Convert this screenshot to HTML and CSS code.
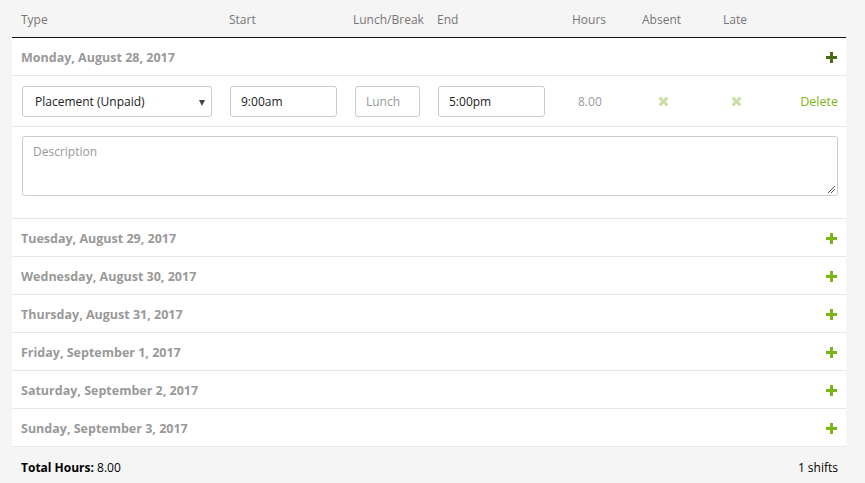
FILE: index.html
```html
<!DOCTYPE html>
<html>
<head>
<meta charset="utf-8">
<link rel="stylesheet" href="styles.css">
</head>
<body>
<div class="sheet">
  <div class="grid head">
    <div>Type</div><div>Start</div><div>Lunch/Break</div><div>End</div><div>Hours</div><div>Absent</div><div>Late</div><div></div>
  </div>
  <div class="panel">
    <div class="day open"><span>Monday, August 28, 2017</span><span class="plus dark"></span></div>
    <div class="grid entry">
      <div><div class="select">Placement (Unpaid)<span class="caret"></span></div></div>
      <div><div class="input w107">9:00am</div></div>
      <div><div class="input w65 ph">Lunch</div></div>
      <div><div class="input w107">5:00pm</div></div>
      <div class="hours">8.00</div>
      <div class="mark absent"><span class="x"></span></div>
      <div class="mark late"><span class="x"></span></div>
      <div class="del">Delete</div>
    </div>
    <div class="descrow"><div class="textarea">Description<span class="grip"></span></div></div>
    <div class="day"><span>Tuesday, August 29, 2017</span><span class="plus"></span></div>
    <div class="day"><span>Wednesday, August 30, 2017</span><span class="plus"></span></div>
    <div class="day"><span>Thursday, August 31, 2017</span><span class="plus"></span></div>
    <div class="day"><span>Friday, September 1, 2017</span><span class="plus"></span></div>
    <div class="day"><span>Saturday, September 2, 2017</span><span class="plus"></span></div>
    <div class="day"><span>Sunday, September 3, 2017</span><span class="plus"></span></div>
  </div>
  <div class="foot"><div><b>Total Hours:</b> 8.00</div><div>1 shifts</div></div>
</div>
</body>
</html>
```
FILE: styles.css
```css
html, body { margin: 0; padding: 0; background: #f5f5f5; }
body { font-family: "Open Sans", "Noto Sans", sans-serif; font-size: 12px; color: #000; }
.sheet { width: 834px; margin-left: 12px; }
.grid { display: grid; grid-template-columns: 208px 124px 84px 135px 70px 81px 64px 1fr; align-items: center; }
.head { height: 37px; border-bottom: 1px solid #111; color: #777; padding-left: 9px; padding-right: 8px; }
.head > div { margin-top: 1px; }
.panel { background: #fff; }
.day { display: flex; justify-content: space-between; align-items: center; border-bottom: 1px solid #e8e8e8; padding: 1px 9px 0 9px; box-sizing: border-box; height: 38px; font-weight: bold; color: #999; font-size: 12.5px; }
.plus { width: 11px; height: 11px; position: relative; }
.plus::before, .plus::after { content: ""; position: absolute; background: #7cb518; }
.plus::before { left: 4px; top: 0; width: 3px; height: 11px; }
.plus::after { left: 0; top: 4px; width: 11px; height: 3px; }
.plus.dark::before, .plus.dark::after { background: #4a6a14; }
.entry { height: 50px; border-bottom: 1px solid #e8e8e8; padding-left: 10px; padding-right: 8px; }
.select, .input { box-sizing: border-box; height: 31px; border: 1px solid #ccc; border-radius: 3px; display: flex; align-items: center; color: #222; }
.select { width: 190px; padding-left: 12px; position: relative; }
.caret { position: absolute; right: 6px; top: 13px; width: 0; height: 0; border-left: 3px solid transparent; border-right: 3px solid transparent; border-top: 6px solid #444; }
.input { padding-left: 10px; }
.w107 { width: 107px; }
.w65 { width: 65px; margin-left: 1px; }
.ph { color: #999; }
.hours { color: #999; padding-left: 5px; }
.absent { padding-left: 16px; }
.late { padding-left: 8px; }
.x { display: inline-block; width: 9px; height: 9px; position: relative; }
.x::before, .x::after { content: ""; position: absolute; left: 3px; top: -1px; width: 3px; height: 11px; background: #c9dfa6; }
.x::before { transform: rotate(45deg); }
.x::after { transform: rotate(-45deg); }
.del { color: #7cb518; text-align: right; font-size: 12.5px; }
.descrow { height: 92px; border-bottom: 1px solid #e8e8e8; padding: 9px 8px 0 10px; box-sizing: border-box; }
.textarea { box-sizing: border-box; height: 60px; border: 1px solid #ccc; border-radius: 3px; padding: 6px 10px; color: #999; position: relative; }
.grip { position: absolute; right: 2px; bottom: 2px; width: 7px; height: 7px; background: linear-gradient(135deg, transparent 45%, #555 46%, #555 52%, transparent 53%, transparent 70%, #555 71%, #555 77%, transparent 78%); }
.foot { display: flex; justify-content: space-between; align-items: center; height: 36px; padding: 2px 8px 0 9px; }
```
